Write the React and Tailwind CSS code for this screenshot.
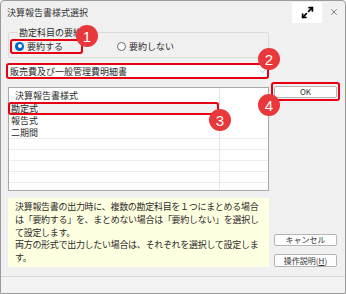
import React from 'react';
import { Maximize2, X, ChevronDown } from 'lucide-react';

const jp = { fontFamily: '"Noto Sans CJK JP", "Noto Sans", sans-serif' };

// numbered red marker laid over the dialog
const Badge = ({ n, className }) => (
  <div
    className={`absolute w-[22px] h-[22px] rounded-full bg-[#e8383b] text-white flex items-center justify-center text-[15px] leading-none ${className}`}
    style={{ fontFamily: '"Liberation Sans", Arial, sans-serif' }}
  >
    {n}
  </div>
);

const Frame = ({ className }) => (
  <div className={`absolute border-2 border-[#e60012] rounded-[3px] ${className}`} />
);

const Button = ({ children, className = '' }) => (
  <div className={`h-[12px] bg-[#fdfdfd] border border-[#b5b5b5] rounded-[2px] flex items-center justify-center text-[8px] leading-none text-[#333] ${className}`}>
    {children}
  </div>
);

const rows = ['勘定式', '報告式', '二期間'];

export default function App() {
  return (
    <div className="relative w-[346px] h-[294px] overflow-hidden bg-[#f0f0f0] border border-[#9a9a9a] rounded-t-[4px] text-[#2a2a2a]" style={jp}>
      {/* Title bar */}
      <div className="h-[22px] flex items-center">
        <span className="pl-[6px] text-[9px] leading-none text-[#333]">決算報告書様式選択</span>
        <div className="ml-auto w-[30px] h-[21px] bg-white flex items-center justify-center">
          <Maximize2 className="w-[13px] h-[13px] text-black" strokeWidth={3.2} />
        </div>
        <div className="w-[23px] flex items-center justify-center">
          <X className="w-[10px] h-[10px] text-[#444]" strokeWidth={1.5} />
        </div>
      </div>

      <div className="flex">
        {/* Left column */}
        <div className="ml-[7px] w-[261px] flex flex-col">
          <fieldset className="mt-[4px] h-[31px] border border-[#dadada] rounded-[2px] pl-[6px]">
            <legend className="ml-[3px] px-[1px] text-[9px] leading-[11px]">勘定科目の要約</legend>
            <div className="flex items-center h-[16px] text-[9px] leading-none">
              <span className="w-[9px] h-[9px] rounded-full bg-[#0067c0] flex items-center justify-center">
                <span className="w-[4px] h-[4px] rounded-full bg-white" />
              </span>
              <span className="ml-[3px]">要約する</span>
              <span className="ml-[54px] w-[9px] h-[9px] rounded-full border border-[#666] bg-white" />
              <span className="ml-[3px]">要約しない</span>
            </div>
          </fieldset>

          <div className="mt-[6px] h-[14px] bg-white flex items-center px-[2px] text-[9px] leading-none">
            <span>販売費及び一般管理費明細書</span>
            <ChevronDown className="ml-auto w-[9px] h-[9px] text-[#888]" strokeWidth={1.5} />
          </div>

          <div className="mt-[9px] h-[104px] bg-white border border-[#a8a8a8] flex overflow-hidden text-[9px] leading-none">
            <div className="w-[211px] border-r border-[#e4e4e4] flex flex-col">
              <div className="h-[14px] shrink-0 flex items-center pl-[6px]">決算報告書様式</div>
              {rows.map((r, i) => (
                <div key={r} className={`h-[12px] shrink-0 flex items-center pl-[2px] ${i === 0 ? 'bg-[#f0f0f0]' : ''}`}>{r}</div>
              ))}
              {[0, 1, 2, 3, 4].map((i) => (
                <div key={i} className="h-[11px] shrink-0 border-t border-[#ececec]" />
              ))}
            </div>
            <div className="flex-1 flex flex-col">
              <div className="h-[50px] shrink-0" />
              {[0, 1, 2, 3, 4].map((i) => (
                <div key={i} className="h-[11px] shrink-0 border-t border-[#ececec]" />
              ))}
            </div>
          </div>

          <div className="mt-[7px] h-[69px] bg-[#ffffe1] pl-[7px] pt-[3px] text-[9px] leading-[12.8px] tracking-[-0.3px] whitespace-nowrap">
            <p>決算報告書の出力時に、複数の勘定科目を１つにまとめる場合</p>
            <p>は「要約する」を、まとめない場合は「要約しない」を選択し</p>
            <p>て設定します。</p>
            <p>両方の形式で出力したい場合は、それぞれを選択して設定しま</p>
            <p>す。</p>
          </div>
        </div>

        {/* Right column */}
        <div className="ml-[5px] w-[63px] flex flex-col">
          <Button className="mt-[63px] border-[#0078d4]">OK</Button>
          <Button className="mt-[136px]">キャンセル</Button>
          <Button className="mt-[8px] h-[13px]">
            操作説明(<span className="underline">H</span>)
          </Button>
        </div>
      </div>

      {/* Bottom strip */}
      <div className="absolute left-0 right-0 bottom-0 h-[17px] border-t border-[#d8d8d8] bg-[#f3f3f3]" />

      {/* Annotations */}
      <Frame className="left-[9px] top-[38px] w-[73px] h-[15px]" />
      <Frame className="left-[5px] top-[62px] w-[263px] h-[16px]" />
      <Frame className="left-[7px] top-[101px] w-[211px] h-[13px]" />
      <Frame className="left-[270px] top-[81px] w-[69px] h-[19px]" />
      <Badge n="1" className="left-[75px] top-[24px]" />
      <Badge n="2" className="left-[257px] top-[47px]" />
      <Badge n="3" className="left-[208px] top-[108px]" />
      <Badge n="4" className="left-[257px] top-[93px]" />
    </div>
  );
}
